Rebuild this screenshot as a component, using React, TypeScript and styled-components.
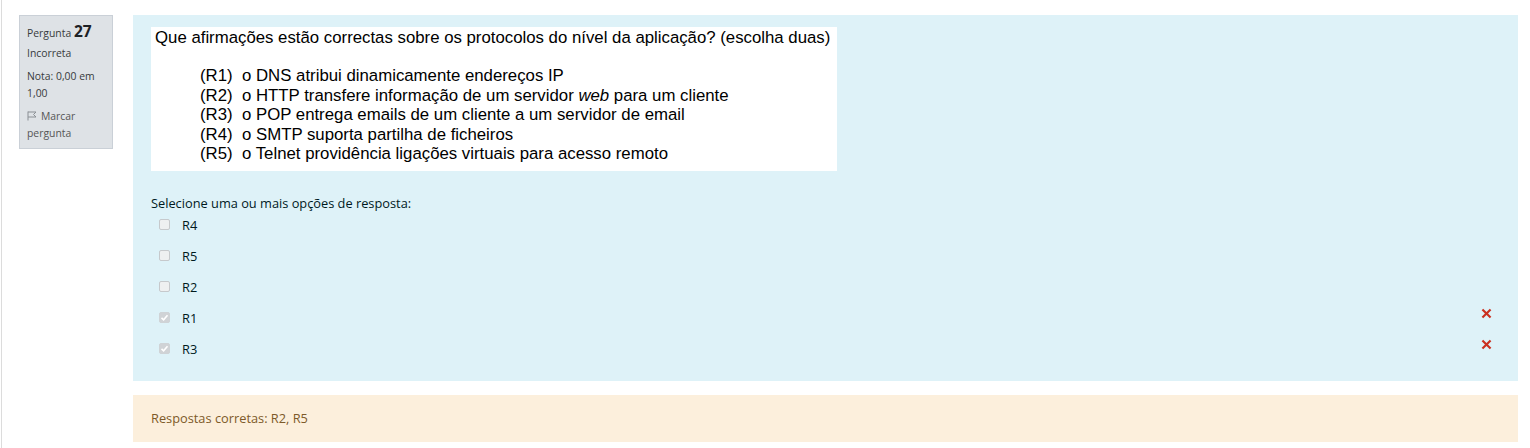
import React from "react";
import styled, { createGlobalStyle } from "styled-components";

const Global = createGlobalStyle`
  html, body { margin: 0; padding: 0; background: #ffffff; }
  body { font-family: "Open Sans", "Noto Sans", sans-serif; }
`;

const Page = styled.div`
  margin-left: 1px;
  border-left: 1px solid #dcdcdc;
  min-height: 448px;
  box-sizing: border-box;
  padding: 15px 12px 0 17px;
`;

const Question = styled.div`
  display: flex;
  align-items: flex-start;
  gap: 20px;
`;

const Info = styled.div`
  box-sizing: border-box;
  width: 94px;
  flex: none;
  background: #dee2e6;
  border: 1px solid #cad0d7;
  padding: 6px 7px 6px 7px;
  color: #373a3c;
  font-size: 10.4px;
  line-height: 17px;
`;

const No = styled.div`
  line-height: 18px;
  b {
    font-size: 15.5px;
    font-weight: 700;
    color: #1d2125;
  }
`;

const InfoLine = styled.div<{ $gap?: number }>`
  margin-top: ${(p) => p.$gap ?? 0}px;
`;

const FlagLine = styled.div`
  margin-top: 6px;
  color: #555;
  svg { vertical-align: -1px; margin-right: 4px; }
`;

const Content = styled.div`
  flex: 1;
  min-width: 0;
`;

const Formulation = styled.div`
  background: #def2f8;
  color: #001a1e;
  padding: 12px 18px 11px 18px;
`;

const QImage = styled.div`
  width: 686px;
  height: 144px;
  box-sizing: border-box;
  background: #ffffff;
  padding: 1px 0 0 4px;
  font-family: "Liberation Sans", Arial, sans-serif;
  font-size: 16.8px;
  line-height: 19.5px;
  color: #000;
`;

const QTitle = styled.div`
  margin-bottom: 18.5px;
`;

const QList = styled.div`
  display: grid;
  grid-template-columns: 42px auto;
  padding-left: 45px;
`;

const Prompt = styled.div`
  margin-top: 23.5px;
  font-size: 12.8px;
  line-height: 17px;
`;

const Options = styled.div`
  display: flex;
  flex-direction: column;
  margin-top: 3px;
`;

const Option = styled.div`
  display: flex;
  align-items: flex-start;
  height: 31px;
  font-size: 12.8px;
  line-height: 20px;
`;

const Box = styled.span<{ $checked?: boolean }>`
  box-sizing: border-box;
  width: 11px;
  height: 11px;
  margin: 4px 12px 0 8px;
  border-radius: 2px;
  border: 1px solid ${(p) => (p.$checked ? "#cfd3d6" : "#c6c9cc")};
  background: ${(p) => (p.$checked ? "#d0d3d6" : "#eef0f1")};
  display: flex;
  align-items: center;
  justify-content: center;
`;

const Label = styled.span`
  flex: 1;
`;

const Cross = styled.span`
  margin-right: 8px;
  margin-top: 0px;
  color: #ca3120;
  display: flex;
  svg { display: block; }
`;

const Outcome = styled.div`
  margin-top: 14px;
  background: #fcefdc;
  color: #7d5a29;
  padding: 0 18px;
  height: 47px;
  line-height: 47px;
  font-size: 12.8px;
`;

const FlagIcon = () => (
  <svg width="10" height="10" viewBox="0 0 10 10" fill="none" stroke="#8a8f94" strokeWidth="1">
    <path d="M1 0.5 V9.5" />
    <path d="M1 1 H9 L6.5 3.5 L9 6 H1" />
  </svg>
);

const Check = () => (
  <svg width="9" height="9" viewBox="0 0 9 9" fill="none" stroke="#ffffff" strokeWidth="1.6">
    <path d="M1.5 4.8 L3.6 6.8 L7.5 2.2" />
  </svg>
);

const XIcon = () => (
  <svg width="11" height="11" viewBox="0 0 10 10">
    <path d="M2 0.6 L5 3.6 L8 0.6 L9.4 2 L6.4 5 L9.4 8 L8 9.4 L5 6.4 L2 9.4 L0.6 8 L3.6 5 L0.6 2 Z" fill="#ca3120" />
  </svg>
);

const statements: [string, React.ReactNode][] = [
  ["(R1)", "o DNS atribui dinamicamente endereços IP"],
  ["(R2)", <>o HTTP transfere informação de um servidor <i>web</i> para um cliente</>],
  ["(R3)", "o POP entrega emails de um cliente a um servidor de email"],
  ["(R4)", "o SMTP suporta partilha de ficheiros"],
  ["(R5)", "o Telnet providência ligações virtuais para acesso remoto"],
];

const options = [
  { label: "R4", checked: false, wrong: false },
  { label: "R5", checked: false, wrong: false },
  { label: "R2", checked: false, wrong: false },
  { label: "R1", checked: true, wrong: true },
  { label: "R3", checked: true, wrong: true },
];

export default function App() {
  return (
    <>
      <Global />
      <Page>
        <Question>
          <Info>
            <No>
              Pergunta <b>27</b>
            </No>
            <InfoLine $gap={2.5}>Incorreta</InfoLine>
            <InfoLine $gap={6}>Nota: 0,00 em 1,00</InfoLine>
            <FlagLine>
              <FlagIcon />
              Marcar pergunta
            </FlagLine>
          </Info>
          <Content>
            <Formulation>
              <QImage>
                <QTitle>
                  Que afirmações estão correctas sobre os protocolos do nível da aplicação? (escolha duas)
                </QTitle>
                <QList>
                  {statements.map(([k, v]) => (
                    <React.Fragment key={k}>
                      <span>{k}</span>
                      <span>{v}</span>
                    </React.Fragment>
                  ))}
                </QList>
              </QImage>
              <Prompt>Selecione uma ou mais opções de resposta:</Prompt>
              <Options>
                {options.map((o) => (
                  <Option key={o.label}>
                    <Box $checked={o.checked}>{o.checked && <Check />}</Box>
                    <Label>{o.label}</Label>
                    {o.wrong && (
                      <Cross>
                        <XIcon />
                      </Cross>
                    )}
                  </Option>
                ))}
              </Options>
            </Formulation>
            <Outcome>Respostas corretas: R2, R5</Outcome>
          </Content>
        </Question>
      </Page>
    </>
  );
}
